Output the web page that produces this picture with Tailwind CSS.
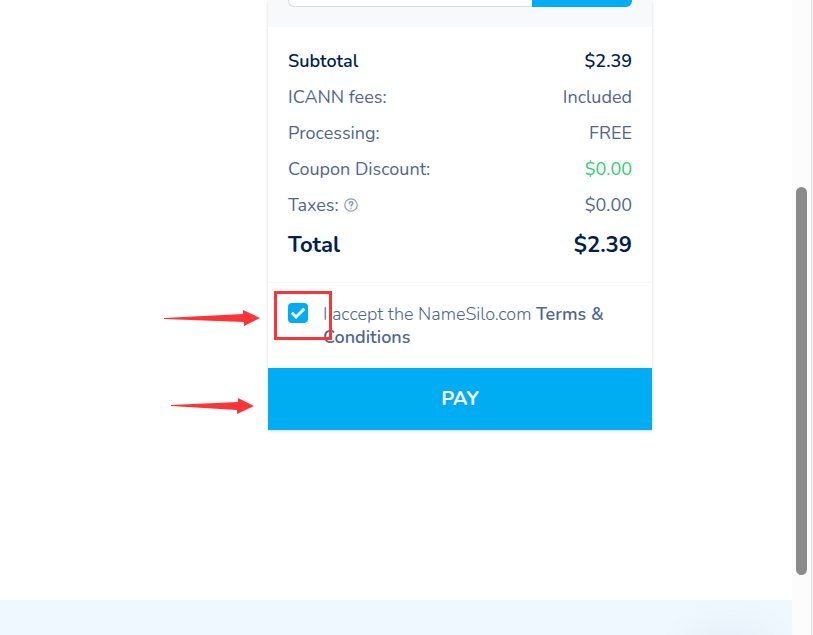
<!DOCTYPE html>
<html lang="en">
<head>
<meta charset="utf-8">
<meta name="viewport" content="width=device-width, initial-scale=1">
<title>Checkout</title>
<script src="https://cdn.jsdelivr.net/npm/@tailwindcss/browser@4"></script>
</head>
<body class="flex h-screen overflow-hidden bg-white font-[Nunito,'Noto_Sans',sans-serif] text-[18px] text-[#506690]">
  <div class="relative flex min-w-0 flex-1 flex-col overflow-hidden">
    <main class="flex-1 pr-[140px] pl-[268px]">
      <section class="relative bg-white shadow-[0_1px_3px_rgba(0,0,0,0.16)]">
        <form class="flex h-[27px] items-start bg-[#f7f9fb] px-5">
          <input type="text" aria-label="Coupon code" class="h-[7px] min-w-0 flex-1 rounded-bl-md border border-t-0 border-r-0 border-[#d8dde3] bg-white outline-none">
          <button type="button" aria-label="Apply coupon" class="h-[7px] w-[100px] rounded-br-md bg-[#00adf3]"></button>
        </form>

        <dl class="border-b border-[#f5f6f7] px-5 pt-4 pb-[15px] leading-9">
          <div class="flex justify-between font-semibold text-[#001f4f]"><dt>Subtotal</dt><dd>$2.39</dd></div>
          <div class="flex justify-between"><dt>ICANN fees:</dt><dd>Included</dd></div>
          <div class="flex justify-between"><dt>Processing:</dt><dd>FREE</dd></div>
          <div class="flex justify-between"><dt>Coupon Discount:</dt><dd class="text-[#2ecc71]">$0.00</dd></div>
          <div class="flex justify-between">
            <dt class="flex items-center gap-1">Taxes:
              <svg class="size-4" viewBox="0 0 16 16" fill="none" stroke="#8f9cb5" stroke-width="1.2" stroke-linecap="round" aria-hidden="true"><circle cx="8" cy="8" r="6.200"/><path stroke-width="1.6" d="M6.200 6.400C6.300 5.300 7 4.800 8 4.800c1.100 0 1.900.6 1.900 1.500C9.900 7.500 8 7.500 8 8.900M8 11.200v.1"/></svg>
            </dt><dd>$0.00</dd>
          </div>
          <div class="flex justify-between text-[22px] leading-[44px] font-bold text-[#001f4f]"><dt>Total</dt><dd>$2.39</dd></div>
        </dl>

        <div class="flex gap-[15px] px-5 pt-5 pb-[19px] leading-[23px]">
          <span class="grid size-5 shrink-0">
            <input id="terms" type="checkbox" checked class="peer col-start-1 row-start-1 size-5 appearance-none rounded-sm bg-white checked:bg-[#00adf3]">
            <svg class="pointer-events-none col-start-1 row-start-1 hidden size-5 peer-checked:block" viewBox="0 0 20 20" fill="none" stroke="#fff" stroke-width="3" aria-hidden="true"><path d="M3.800 9.800l4.200 4.200 8.300-8.300"/></svg>
          </span>
          <label for="terms" class="font-light">I accept the NameSilo.com <a href="#" class="font-semibold">Terms &amp; Conditions</a></label>
        </div>

        <button type="button" class="block h-[62px] w-full bg-[#00adf3] text-[20px] font-bold text-white">PAY</button>

        <div class="pointer-events-none absolute top-[291px] left-[6px] h-[49px] w-[58px] border-3 border-[#fb3536]"></div>
        <svg class="pointer-events-none absolute top-[309px] -left-[104px] h-[18px] w-24" viewBox="0 0 96 18" fill="#fb3536" aria-hidden="true"><path d="M0 9L79 5V1l17 8-16 8v-4L0 10z"/></svg>
        <svg class="pointer-events-none absolute top-[397px] -left-[97px] h-[18px] w-[83px]" viewBox="0 0 83 18" fill="#fb3536" aria-hidden="true"><path d="M0 8L67 5V1l16 8-17 8v-4L0 9z"/></svg>
      </section>
    </main>
    <footer class="h-[35px] shrink-0 bg-[#eff8ff]"></footer>
    <div class="pointer-events-none absolute right-[32px] -bottom-[70px] size-[60px] rounded-full shadow-[0_0_50px_12px_rgba(0,30,40,0.07)]"></div>
  </div>
  <div class="w-5 shrink-0 border-r border-[#dfdfdf] bg-[#fcfcfc] pt-[187px] pl-1" aria-hidden="true">
    <div class="h-[388px] w-[11px] rounded-full bg-[#8b8b8b]"></div>
  </div>
  <div class="w-px shrink-0 bg-[#f5f5f5]"></div>
</body>
</html>
